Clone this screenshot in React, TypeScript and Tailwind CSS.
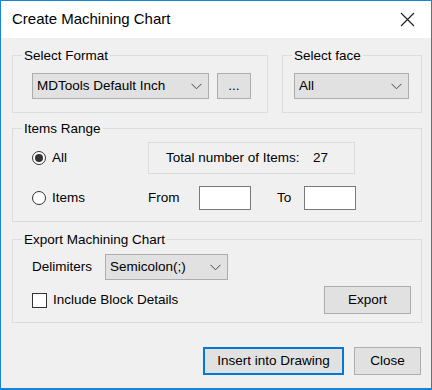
import React, { useState } from 'react';

const font = { fontFamily: '"Liberation Sans", Arial, sans-serif' };

const Chevron: React.FC = () => (
  <svg width="11" height="7" viewBox="0 0 11 7" fill="none" stroke="#444" strokeWidth={1}>
    <path d="M0.5 0.8L5.5 5.8L10.5 0.8" />
  </svg>
);

const Combo: React.FC<{ value: string; className: string }> = ({ value, className }) => (
  <div
    className={`flex items-center justify-between bg-[#e1e1e1] border border-[#adadad] pl-[4px] pr-[6px] text-[13.5px] text-black ${className}`}
  >
    <span>{value}</span>
    <Chevron />
  </div>
);

const Radio: React.FC<{ checked: boolean; label: string; onClick: () => void }> = ({ checked, label, onClick }) => (
  <button onClick={onClick} className="flex items-center gap-[6px] text-[13.5px] text-black">
    <span className="w-[14px] h-[14px] rounded-full border border-[#333] bg-white flex items-center justify-center">
      {checked && <span className="w-[8px] h-[8px] rounded-full bg-[#333]" />}
    </span>
    <span>{label}</span>
  </button>
);

const Group: React.FC<{ title: string; className: string; children: React.ReactNode }> = ({ title, className, children }) => (
  <fieldset className={`border border-[#dcdcdc] p-0 ${className}`}>
    <legend className="ml-[9px] px-[2px] text-[13.5px] leading-[15px] text-black">{title}</legend>
    {children}
  </fieldset>
);

const Button: React.FC<{ label: string; className: string; primary?: boolean }> = ({ label, className, primary }) => (
  <button
    className={`bg-[#e1e1e1] text-[13.5px] text-black flex items-center justify-center ${
      primary ? 'border-2 border-[#0078d7]' : 'border border-[#adadad]'
    } ${className}`}
  >
    {label}
  </button>
);

const App: React.FC = () => {
  const [range, setRange] = useState<'all' | 'items'>('all');
  const [blockDetails, setBlockDetails] = useState(false);

  return (
    <div style={font} className="w-[432px] h-[390px] bg-white">
      <div className="w-full h-full border border-b-2 border-[#1883d7] flex flex-col">
        {/* title bar */}
        <div className="h-[37px] bg-white flex items-center justify-between pl-[11px] pr-[16px] shrink-0">
          <span className="text-[15px] text-black">Create Machining Chart</span>
          <svg width="15" height="15" viewBox="0 0 15 15" stroke="#222" strokeWidth={1.2}>
            <path d="M1 1L14 14M14 1L1 14" />
          </svg>
        </div>

        <div className="flex-1 bg-[#f0f0f0] pl-[11px] pr-[9px] pt-[10px]">
          {/* format + face */}
          <div className="flex gap-[14px]">
            <Group title="Select Format" className="w-[256px]">
              <div className="flex gap-[8px] pl-[19px] pt-[10px] pb-[13px]">
                <Combo value="MDTools Default Inch" className="w-[177px] h-[26px]" />
                <Button label="..." className="w-[34px] h-[26px]" />
              </div>
            </Group>
            <Group title="Select face" className="w-[140px]">
              <div className="pl-[11px] pt-[10px] pb-[13px]">
                <Combo value="All" className="w-[115px] h-[26px]" />
              </div>
            </Group>
          </div>

          {/* items range */}
          <Group title="Items Range" className="w-[410px] mt-[8px]">
            <div className="pl-[19px] pt-[6px] pb-[11px]">
              <div className="flex items-center h-[32px]">
                <div className="w-[116px]">
                  <Radio checked={range === 'all'} label="All" onClick={() => setRange('all')} />
                </div>
                <div className="w-[207px] h-[32px] border border-[#dcdcdc] flex items-center pl-[17px] text-[13.5px] text-black">
                  <span className="w-[147px]">Total number of Items:</span>
                  <span>27</span>
                </div>
              </div>
              <div className="flex items-center h-[24px] mt-[12px] text-[13.5px] text-black">
                <div className="w-[116px]">
                  <Radio checked={range === 'items'} label="Items" onClick={() => setRange('items')} />
                </div>
                <span className="w-[51px]">From</span>
                <input className="w-[52px] h-[24px] bg-white border border-[#7a7a7a] outline-none" />
                <span className="ml-[26px] w-[27px]">To</span>
                <input className="w-[52px] h-[24px] bg-white border border-[#7a7a7a] outline-none" />
              </div>
            </div>
          </Group>

          {/* export */}
          <Group title="Export Machining Chart" className="w-[410px] mt-[10px]">
            <div className="pl-[19px] pr-[10px] pt-[7px] pb-[8px]">
              <div className="flex items-center h-[26px] text-[13.5px] text-black">
                <span className="w-[73px]">Delimiters</span>
                <Combo value="Semicolon(;)" className="w-[123px] h-[26px]" />
              </div>
              <div className="flex items-center justify-between mt-[6px] h-[28px]">
                <button
                  onClick={() => setBlockDetails(!blockDetails)}
                  className="flex items-center gap-[6px] text-[13.5px] text-black"
                >
                  <span className="w-[15px] h-[15px] border border-[#333] bg-white flex items-center justify-center text-[11px] leading-none">
                    {blockDetails ? '✓' : ''}
                  </span>
                  <span>Include Block Details</span>
                </button>
                <Button label="Export" className="w-[87px] h-[28px]" />
              </div>
            </div>
          </Group>

          {/* footer */}
          <div className="flex justify-end gap-[10px] mt-[24px] pr-[1px]">
            <Button label="Insert into Drawing" primary className="w-[141px] h-[28px]" />
            <Button label="Close" className="w-[67px] h-[28px]" />
          </div>
        </div>
      </div>
    </div>
  );
};

export default App;
